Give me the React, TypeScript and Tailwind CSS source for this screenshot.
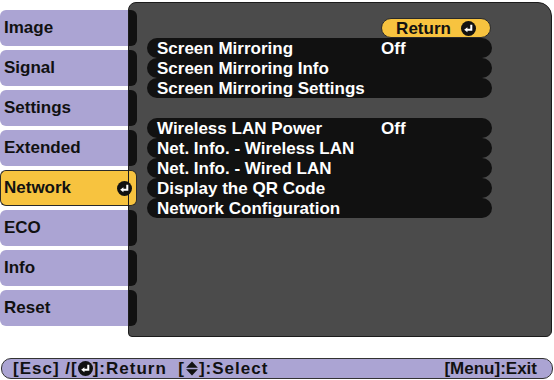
import React from 'react';

const tabs = ['Image', 'Signal', 'Settings', 'Extended', 'Network', 'ECO', 'Info', 'Reset'];
const selected = 'Network';

const groupOne = [
  { label: 'Screen Mirroring', value: 'Off' },
  { label: 'Screen Mirroring Info', value: '' },
  { label: 'Screen Mirroring Settings', value: '' },
];

const groupTwo = [
  { label: 'Wireless LAN Power', value: 'Off' },
  { label: 'Net. Info. - Wireless LAN', value: '' },
  { label: 'Net. Info. - Wired LAN', value: '' },
  { label: 'Display the QR Code', value: '' },
  { label: 'Network Configuration', value: '' },
];

// black disc with the white "enter" arrow
const EnterIcon = ({ size = 14 }: { size?: number }) => (
  <svg width={size} height={size} viewBox="0 0 14 14">
    <circle cx="7" cy="7" r="7" fill="#111" />
    <path d="M9.6 3.4 V8.2 H5.4" stroke="#fff" strokeWidth="1.9" fill="none" />
    <path d="M3 8.2 L6 5.8 V10.6 Z" fill="#fff" />
  </svg>
);

const UpDownIcon = () => (
  <svg width="14" height="15" viewBox="0 0 12 14">
    <path d="M6 0.5 L11.5 6.3 H0.5 Z" fill="#111" />
    <path d="M6 13.5 L11.5 7.7 H0.5 Z" fill="#111" />
  </svg>
);

const Row = ({ label, value }: { label: string; value: string }) => (
  <div className="h-[20px] rounded-[10px] bg-[#111111] flex items-center text-white text-[17px] font-bold leading-none">
    <span className="w-[234px] pl-[10px] whitespace-nowrap">{label}</span>
    <span>{value}</span>
  </div>
);

export default function App() {
  return (
    <div className="w-[554px] h-[380px] bg-white overflow-hidden font-['Liberation_Sans',Arial,sans-serif]">
      <div className="flex pt-[2px]">
        {/* Menu tabs */}
        <div className="w-[128px] flex flex-col gap-[4px] pt-[8px]">
          {tabs.map((t) =>
            t === selected ? (
              <div
                key={t}
                className="h-[36px] bg-[#f7c33f] rounded-l-[6px] border border-r-0 border-[#2a2a2a] flex items-center justify-between pl-[3px] text-[17px] font-bold text-[#111]"
              >
                <span>{t}</span>
                <span className="relative z-10 -mr-[4px] flex">
                  <EnterIcon size={15} />
                </span>
              </div>
            ) : (
              <div
                key={t}
                className="h-[36px] bg-[#aba4d3] rounded-l-[6px] flex items-center pl-[4px] text-[17px] font-bold text-[#111]"
              >
                {t}
              </div>
            )
          )}
        </div>

        {/* Main panel */}
        <div className="w-[424px] h-[335px] bg-[#4b4b4b] border border-[#1c1c1c] rounded-tl-[8px] rounded-tr-[14px] rounded-br-[6px] rounded-bl-[4px] flex">
          <div className="w-[8px] flex flex-col gap-[4px] pt-[7px]">
            {tabs.map((t) =>
              t === selected ? (
                <div key={t} className="h-[36px] bg-[#f7c33f] rounded-r-[6px] border border-l-0 border-[#2a2a2a]" />
              ) : (
                <div key={t} className="h-[36px] bg-[#111111] rounded-r-[6px]" />
              )
            )}
          </div>

          <div className="ml-[10px] pt-[15px] w-[345px] flex flex-col">
            <div className="self-end mr-[1px] w-[110px] h-[20px] rounded-[10px] bg-[#f7c33f] border border-[#2a2a2a] flex items-center justify-center gap-[10px] text-[17px] font-bold text-[#111] leading-none">
              <span>Return</span>
              <EnterIcon size={15} />
            </div>
            <div className="flex flex-col">
              {groupOne.map((r) => (
                <Row key={r.label} {...r} />
              ))}
            </div>
            <div className="flex flex-col mt-[20px]">
              {groupTwo.map((r) => (
                <Row key={r.label} {...r} />
              ))}
            </div>
          </div>
        </div>
      </div>

      {/* Footer help bar */}
      <div className="mt-[21px] ml-[1px] w-[552px] h-[21px] rounded-[10px] bg-[#aba4d3] border border-[#333] flex items-center justify-between pl-[11px] pr-[15px] text-[17px] font-bold text-[#111] leading-none">
        <div className="flex items-center whitespace-pre tracking-[1px]">
          <span>[Esc] /[</span>
          <EnterIcon size={15} />
          <span>]:Return  [</span>
          <UpDownIcon />
          <span>]:Select</span>
        </div>
        <span>[Menu]:Exit</span>
      </div>
    </div>
  );
}
